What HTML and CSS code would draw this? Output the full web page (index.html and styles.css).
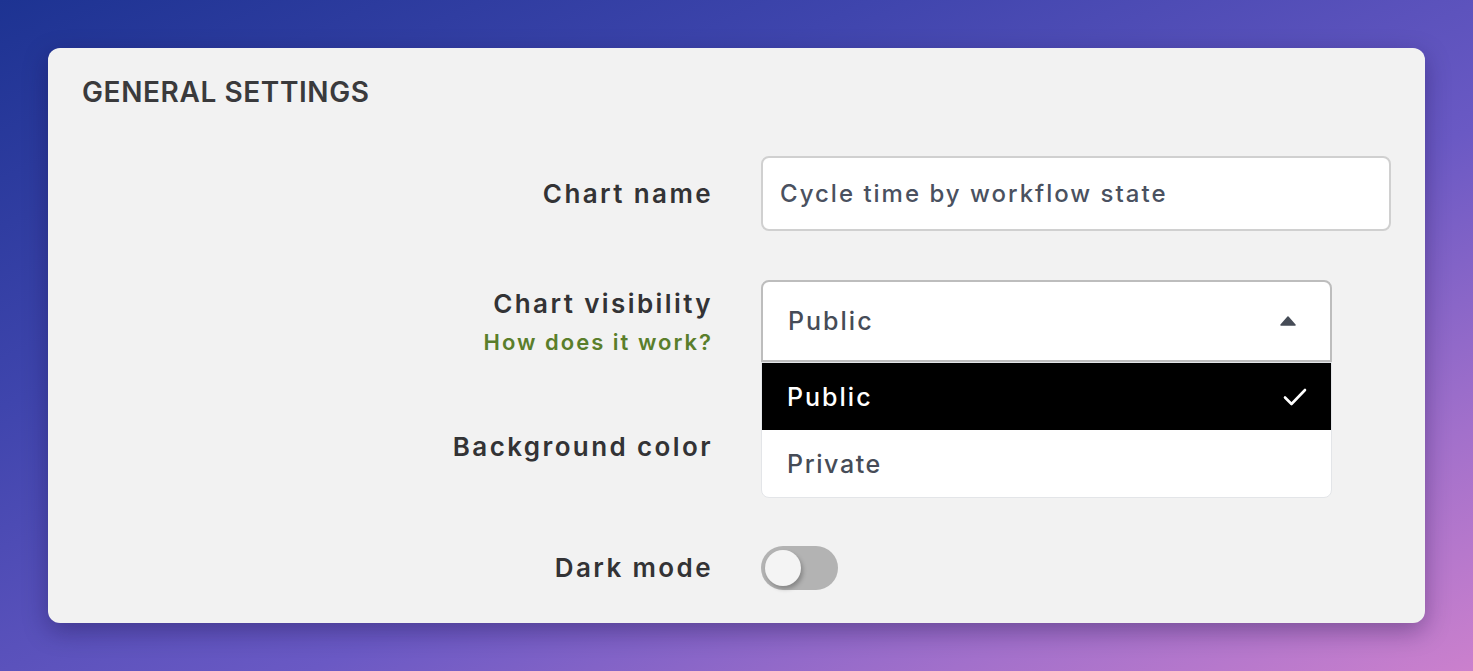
FILE: index.html
```html
<!DOCTYPE html>
<html lang="en">
  <head>
    <meta charset="UTF-8" />
    <meta name="viewport" content="width=device-width, initial-scale=1.0" />
    <title>General settings</title>
    <link rel="stylesheet" href="styles.css">
  </head>
  <body>
    <main class="settings-card">
      <h2 class="settings-title">GENERAL SETTINGS</h2>

      <div class="settings-form">
        <div class="field-row row-name">
          <label class="field-label" for="chart-name">Chart name</label>
          <input class="text-input" id="chart-name" type="text" value="Cycle time by workflow state">
        </div>

        <div class="field-row row-visibility">
          <div class="field-label">
            Chart visibility
            <a class="help-link" href="#">How does it work?</a>
          </div>
          <div class="select-wrap">
            <button class="select-box">
              <span>Public</span>
              <svg class="caret" width="16" height="10" viewBox="0 0 16 10"><path d="M8 1 L15 9 H1 Z" fill="#464c57" stroke="#464c57" stroke-width="1.5" stroke-linejoin="round"/></svg>
            </button>
            <ul class="select-menu">
              <li class="option selected">
                <span>Public</span>
                <svg width="24" height="20" viewBox="0 0 24 20"><path d="M2 10.5 L8.5 17 L22 3" fill="none" stroke="#fff" stroke-width="2.6" stroke-linecap="round" stroke-linejoin="round"/></svg>
              </li>
              <li class="option">Private</li>
            </ul>
          </div>
        </div>

        <div class="field-row row-color">
          <div class="field-label">Background color</div>
          <div class="color-slot"></div>
        </div>

        <div class="field-row row-dark">
          <div class="field-label">Dark mode</div>
          <button class="toggle"><span class="knob"></span></button>
        </div>
      </div>
    </main>
  </body>
</html>
```

FILE: styles.css
```css
* {
  margin: 0;
  padding: 0;
  box-sizing: border-box;
}

body {
  height: 671px;
  overflow: hidden;
  padding: 48px;
  background: linear-gradient(155deg, #1d3392 0%, #3f45ad 30%, #6a59c4 60%, #a270cb 82%, #cb80cd 100%);
  font-family: Inter, "Noto Sans", sans-serif;
}

.settings-card {
  width: 1377px;
  height: 575px;
  background-color: #f2f2f2;
  border-radius: 12px;
  box-shadow: 0 8px 24px rgba(20, 10, 60, 0.35);
  padding: 27px 34px 0 34px;
}

.settings-title {
  font-size: 28px;
  font-weight: 600;
  color: #3a3a3c;
  letter-spacing: 0.6px;
  line-height: 34px;
}

.settings-form {
  margin-top: 47px;
}

.field-row {
  display: grid;
  grid-template-columns: 629px 1fr;
  column-gap: 50px;
  align-items: center;
}

.field-label {
  text-align: right;
  font-size: 26px;
  font-weight: 600;
  color: #333335;
  line-height: 32px;
  letter-spacing: 2.4px;
  margin-right: -2px;
}

.help-link {
  display: block;
  font-size: 22px;
  font-weight: 600;
  line-height: 28px;
  letter-spacing: 2px;
  color: #5a7e2b;
  text-decoration: none;
  margin-top: 8px;
}

.text-input {
  height: 75px;
  width: 630px;
  border: 2px solid #d0d0d0;
  border-radius: 8px;
  background: #fff;
  padding: 0 17px;
  font-family: inherit;
  font-size: 24px;
  font-weight: 500;
  letter-spacing: 2px;
  color: #4a5160;
  outline: none;
}

.row-visibility {
  margin-top: 49px;
  align-items: start;
}

.row-visibility .field-label {
  padding-top: 8px;
}

.select-wrap {
  position: relative;
  width: 571px;
}

.select-box {
  width: 100%;
  height: 82px;
  display: flex;
  align-items: center;
  justify-content: space-between;
  padding: 0 34px 0 25px;
  background: #fff;
  border: 2px solid #bdbdbd;
  border-radius: 8px 8px 0 0;
  font-family: inherit;
  font-size: 25px;
  font-weight: 500;
  letter-spacing: 2px;
  color: #464c57;
}

.select-menu {
  position: absolute;
  top: 82px;
  left: 0;
  width: 100%;
  list-style: none;
  background: #fff;
  border: 1px solid #e3e5e8;
  border-radius: 0 0 8px 8px;
  overflow: hidden;
  z-index: 2;
}

.option {
  height: 67px;
  display: flex;
  align-items: center;
  justify-content: space-between;
  padding: 0 24px 0 25px;
  font-size: 25px;
  font-weight: 500;
  letter-spacing: 1.6px;
  color: #464c57;
}

.option.selected {
  background: #000;
  color: #fff;
  letter-spacing: 2px;
}

.row-color {
  margin-top: 48px;
}

.color-slot {
  height: 74px;
}

.row-dark {
  margin-top: 62px;
}

.toggle {
  width: 77px;
  height: 44px;
  border: none;
  border-radius: 22px;
  background: #b3b3b3;
  padding: 4px;
  display: flex;
}

.knob {
  width: 36px;
  height: 36px;
  border-radius: 50%;
  background: #f4f4f4;
  box-shadow: 2px 3px 4px rgba(0, 0, 0, 0.25);
}
```
